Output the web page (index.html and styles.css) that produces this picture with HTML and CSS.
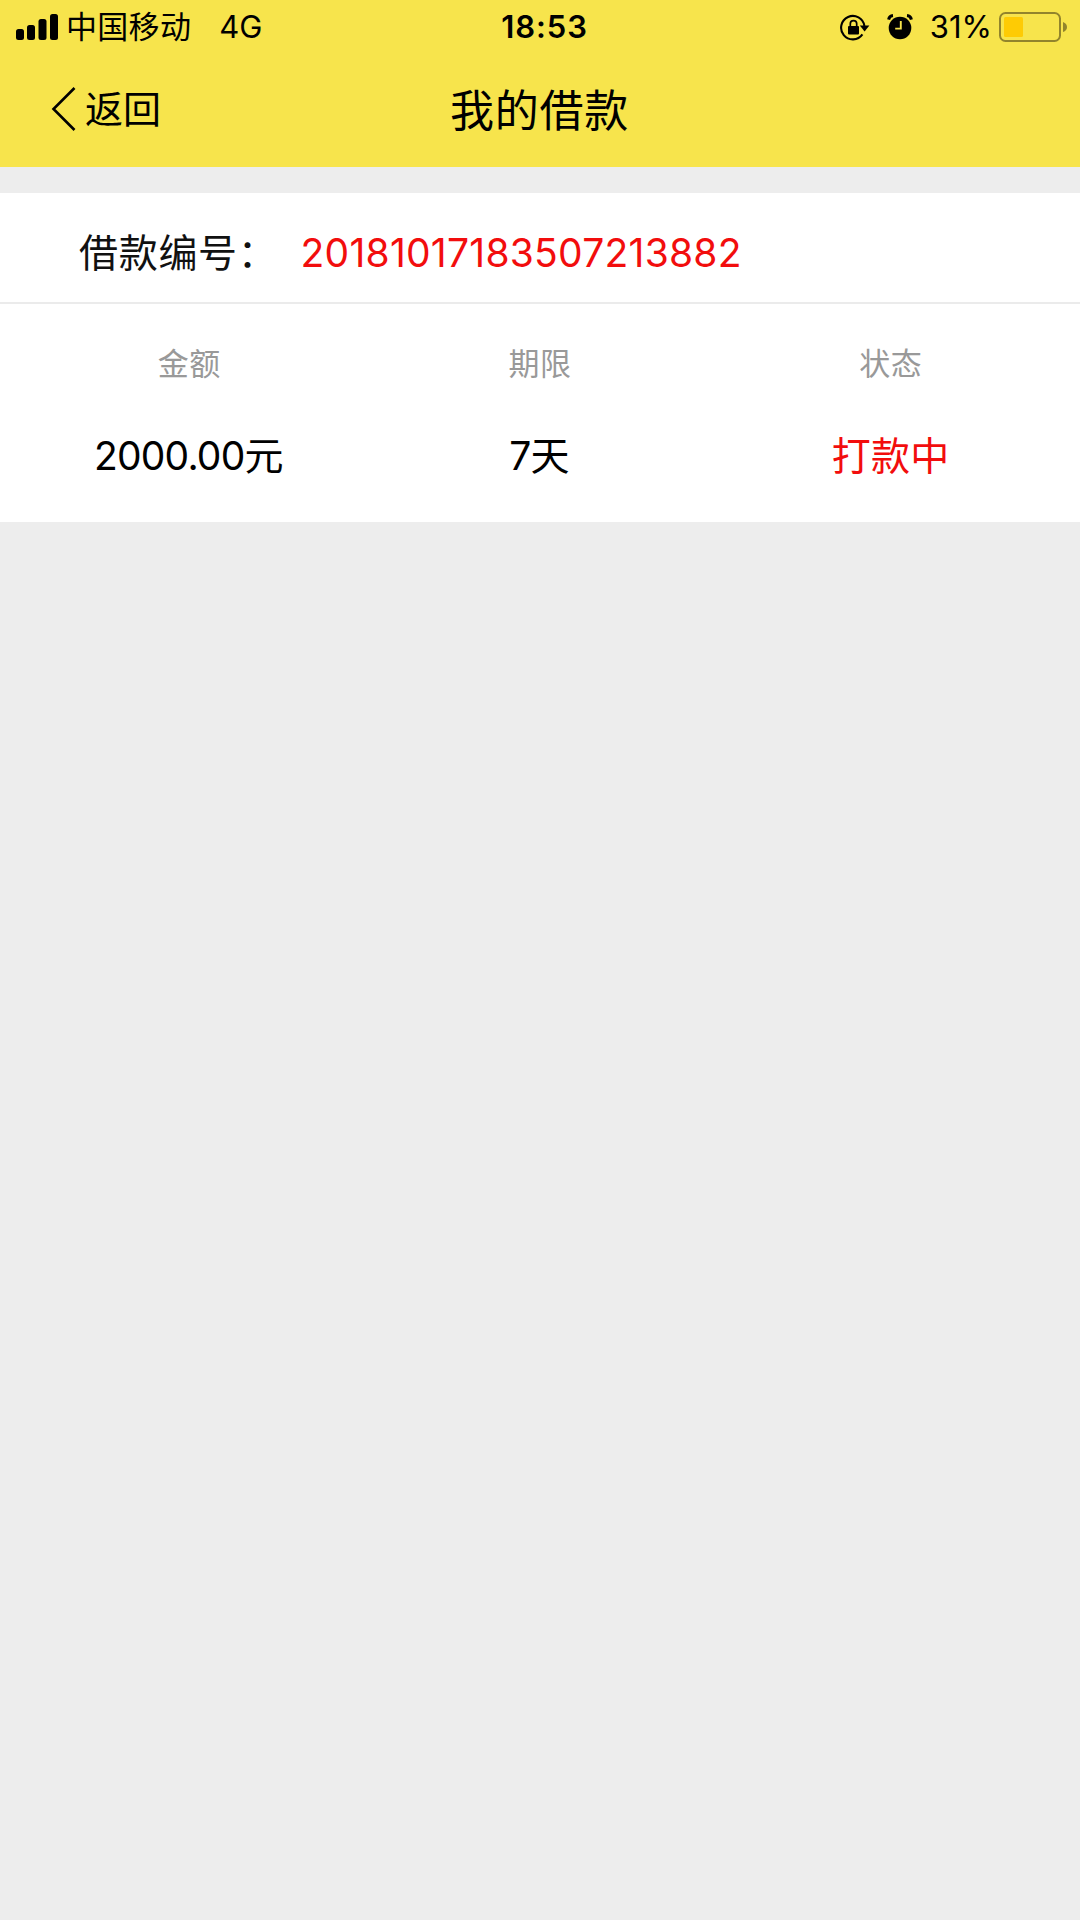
FILE: index.html
```html
<!DOCTYPE html>
<html lang="zh-CN">
<head>
    <meta charset="UTF-8">
    <meta name="viewport" content="width=device-width, initial-scale=1.0">
    <title>我的借款</title>
    <link rel="stylesheet" href="styles.css">
</head>
<body>
    <header class="header">
        <div class="status-bar">
            <div class="status-left">
                <svg class="signal" width="42" height="26" viewBox="0 0 42 26">
                    <rect x="0" y="15" width="8" height="11" rx="2.5"/>
                    <rect x="11" y="11" width="8" height="15" rx="2.5"/>
                    <rect x="22.5" y="5" width="8" height="21" rx="2.5"/>
                    <rect x="34" y="0" width="8" height="26" rx="2.5"/>
                </svg>
                <span class="carrier">中国移动</span>
                <span class="network">4G</span>
            </div>
            <div class="time">18:53</div>
            <div class="status-right">
                <svg class="icon-lock" width="30" height="27" viewBox="0 0 30 27">
                    <path d="M22.4 20.4A11.7 11.7 0 1 1 24.4 12" fill="none" stroke="#000" stroke-width="2.1"/>
                    <path d="M19.8 11.5h9.6l-4.8 6z"/>
                    <rect x="8" y="12" width="11" height="8.5" rx="1"/>
                    <path d="M10.3 12.5v-2.7a3.2 3.2 0 0 1 6.4 0v2.7" fill="none" stroke="#000" stroke-width="1.7"/>
                </svg>
                <svg class="icon-alarm" width="26" height="26" viewBox="0 0 26 26">
                    <circle cx="13" cy="14" r="11.3"/>
                    <path d="M1.6 5.6Q2.4 1.8 6 1.5M24.4 5.6Q23.6 1.8 20 1.5" fill="none" stroke="#000" stroke-width="3"/>
                    <path d="M13.8 7v7.6H8.2" fill="none" stroke="#f7e44c" stroke-width="1.9"/>
                </svg>
                <span class="percent">31%</span>
                <svg class="battery" width="68" height="30" viewBox="0 0 68 30">
                    <rect x="1" y="1" width="60" height="28" rx="5.5" fill="none" stroke="#92842c" stroke-width="2"/>
                    <rect x="5" y="5" width="19" height="20" rx="1.5" fill="#fecb04"/>
                    <path d="M64 10q4 1.5 4 5t-4 5z" fill="#92842c"/>
                </svg>
            </div>
        </div>
        <div class="nav-bar">
            <a class="back" href="#">
                <svg width="26" height="46" viewBox="0 0 26 46">
                    <path d="M23.5 2L2.5 23l21 21" fill="none" stroke="#000" stroke-width="2.6"/>
                </svg>
                <span>返回</span>
            </a>
            <h1 class="title">我的借款</h1>
        </div>
    </header>

    <section class="loan">
        <div class="loan-no">
            <span class="loan-label">借款编号：</span>
            <span class="loan-value">20181017183507213882</span>
        </div>
        <div class="loan-info">
            <div class="info-item">
                <p class="info-name">金额</p>
                <p class="info-value">2000.00元</p>
            </div>
            <div class="info-item">
                <p class="info-name">期限</p>
                <p class="info-value">7天</p>
            </div>
            <div class="info-item">
                <p class="info-name">状态</p>
                <p class="info-value red">打款中</p>
            </div>
        </div>
    </section>
</body>
</html>
```
FILE: styles.css
```css
* {
    box-sizing: border-box;
    margin: 0;
    padding: 0;
}

body {
    min-height: 1920px;
    background-color: #ededed;
    color: #000;
    font-family: Inter, "Noto Sans CJK SC", sans-serif;
    font-weight: 400;
}

svg {
    display: block;
    flex: none;
}

.header {
    height: 167px;
    background-color: #f7e44c;
}

.status-bar {
    display: grid;
    grid-template-columns: 1fr auto 1fr;
    align-items: center;
    height: 54px;
    padding: 0 13px 0 16px;
    font-size: 31px;
    line-height: 54px;
    white-space: nowrap;
}

.status-left,
.status-right {
    display: flex;
    align-items: center;
}

.status-right {
    justify-content: flex-end;
}

.carrier {
    margin-left: 8px;
    letter-spacing: 0.3px;
}

.network {
    margin-left: 28px;
}

.time {
    padding-left: 6px;
    font-weight: 600;
    letter-spacing: 0.9px;
}

.icon-alarm {
    margin-left: 17px;
}

.percent {
    margin-left: 17px;
}

.battery {
    margin-left: 7px;
}

.nav-bar {
    display: grid;
    grid-template-columns: 1fr auto 1fr;
    align-items: center;
    height: 110px;
    padding: 0 51px;
}

.back {
    display: flex;
    align-items: center;
    gap: 8px;
    color: #000;
    font-size: 38px;
    text-decoration: none;
}

.back span {
    padding-bottom: 5px;
}

.title {
    padding: 0 1px 3px 0;
    font-size: 44px;
    font-weight: 400;
    letter-spacing: 0.8px;
}

.loan {
    height: 329px;
    margin-top: 26px;
    background-color: #fff;
}

.loan-no {
    display: flex;
    align-items: baseline;
    height: 111px;
    padding: 30px 0 0 79px;
    border-bottom: 2px solid #ebebeb;
    font-size: 39px;
    line-height: 60px;
}

.loan-label {
    color: #111;
    letter-spacing: 0.7px;
}

.loan-value {
    margin-left: 23px;
    letter-spacing: 0.25px;
}

.loan-value,
.red {
    color: #f20d0d;
}

.loan-info {
    display: grid;
    grid-template-columns: repeat(3, 1fr);
    padding: 35px 14px 0;
    text-align: center;
}

.info-name {
    height: 50px;
    color: #999;
    font-size: 31px;
    line-height: 50px;
    letter-spacing: 0.5px;
}

.info-value {
    height: 60px;
    margin-top: 37px;
    padding-right: 2px;
    font-size: 39px;
    line-height: 60px;
    letter-spacing: -0.8px;
}

.info-value.red {
    padding-right: 0;
    letter-spacing: 0.3px;
}
```
